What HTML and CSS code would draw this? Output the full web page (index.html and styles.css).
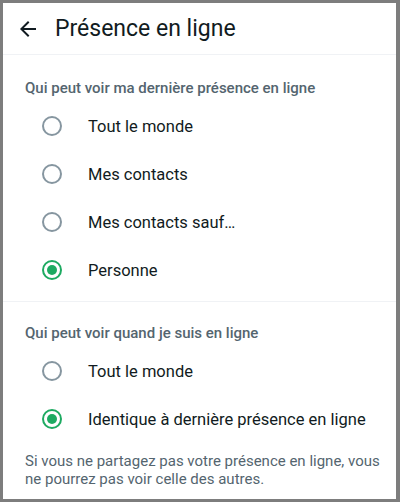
FILE: index.html
```html
<!DOCTYPE html>
<html lang="fr">
<head>
	<meta charset="UTF-8">
	<title>Présence en ligne</title>
	<link rel="stylesheet" href="styles.css">
</head>
<body>
	<div class="screen">
		<div class="topbar">
			<a class="back" href="javascript:;">
				<svg width="24" height="24" viewBox="0 0 24 24"><path d="M20 11H7.83l5.59-5.59L12 4l-8 8 8 8 1.41-1.41L7.83 13H20v-2z" fill="#111b21"/></svg>
			</a>
			<h1 class="title">Présence en ligne</h1>
		</div>

		<div class="section">
			<div class="section-head">Qui peut voir ma dernière présence en ligne</div>
			<div class="option"><span class="radio"></span><span class="label">Tout le monde</span></div>
			<div class="option"><span class="radio"></span><span class="label">Mes contacts</span></div>
			<div class="option"><span class="radio"></span><span class="label">Mes contacts sauf…</span></div>
			<div class="option"><span class="radio checked"></span><span class="label">Personne</span></div>
		</div>

		<div class="section second">
			<div class="section-head">Qui peut voir quand je suis en ligne</div>
			<div class="option"><span class="radio"></span><span class="label">Tout le monde</span></div>
			<div class="option"><span class="radio checked"></span><span class="label">Identique à dernière présence en ligne</span></div>
			<p class="note">Si vous ne partagez pas votre présence en ligne, vous ne pourrez pas voir celle des autres.</p>
		</div>
	</div>
</body>
</html>
```

FILE: styles.css
```css
body {
	margin: 0;
	padding: 3px 4px 3px 3px;
	background: #7d7d7d;
	font-family: Roboto, "Noto Sans", sans-serif;
}
.screen {
	height: 496px;
	background: #fff;
	overflow: hidden;
}
.topbar {
	display: flex;
	align-items: center;
	height: 51px;
	padding-left: 13px;
	border-bottom: 1px solid #f0f2f5;
}
.back {
	display: flex;
	width: 24px;
	height: 24px;
}
.title {
	margin: 0 0 0 15px;
	font-size: 23px;
	font-weight: 400;
	color: #111b21;
}
.section {
	padding: 23px 0 7px;
	border-bottom: 1px solid #f0f2f5;
}
.section.second {
	padding-top: 21px;
	border-bottom: none;
}
.section-head {
	padding-left: 22px;
	height: 20px;
	line-height: 20px;
	font-size: 15px;
	font-weight: 500;
	color: #54656f;
	margin-bottom: 4px;
}
.option {
	display: flex;
	align-items: center;
	height: 48px;
	padding-left: 39px;
}
.radio {
	box-sizing: border-box;
	width: 20px;
	height: 20px;
	border: 2px solid #8696a0;
	border-radius: 50%;
	position: relative;
}
.radio.checked {
	border-color: #1daa61;
}
.radio.checked::after {
	content: "";
	position: absolute;
	left: 3px;
	top: 3px;
	width: 10px;
	height: 10px;
	border-radius: 50%;
	background: #1daa61;
}
.label {
	margin-left: 26px;
	font-size: 16.5px;
	color: #111b21;
}
.note {
	margin: 9px 0 0;
	padding: 0 8px 0 22px;
	font-size: 15px;
	line-height: 18px;
	color: #54656f;
}
```
